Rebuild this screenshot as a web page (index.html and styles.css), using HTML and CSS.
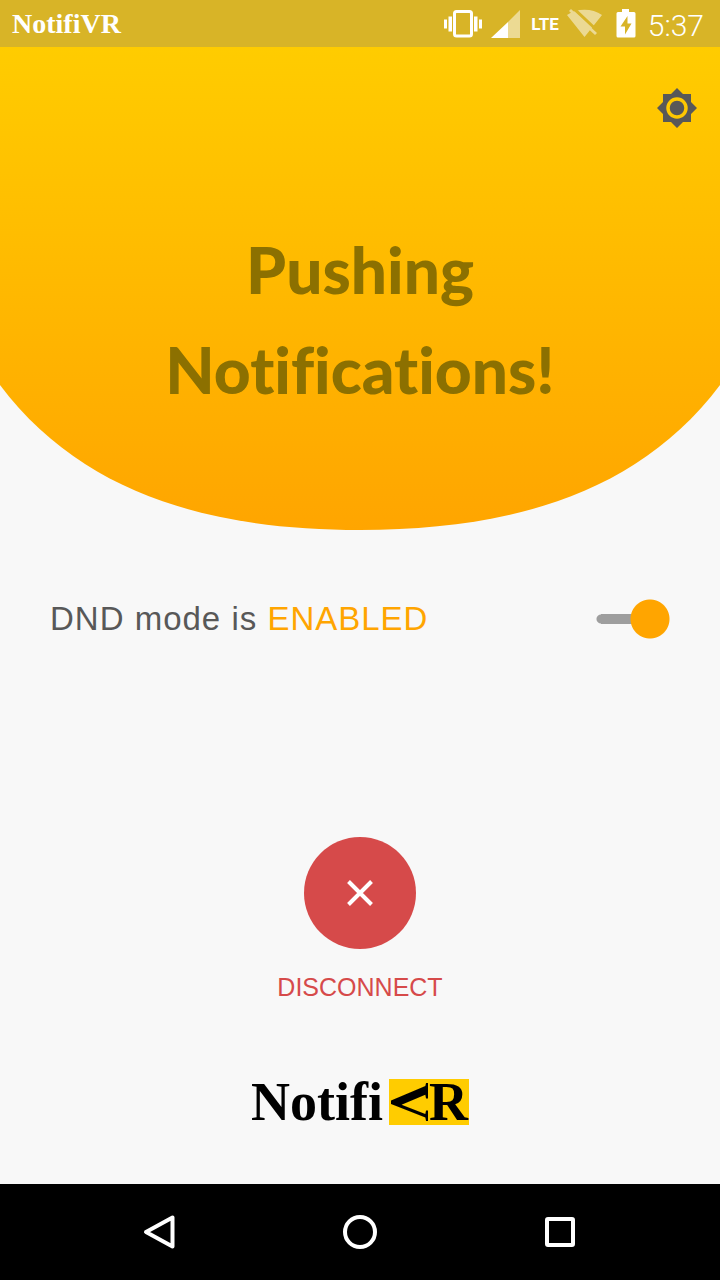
FILE: index.html
```html
<!DOCTYPE html>
<html lang="en">
<head>
<meta charset="utf-8">
<meta name="viewport" content="width=device-width, initial-scale=1">
<title>NotifiVR</title>
<link rel="stylesheet" href="styles.css">
</head>
<body>
<header class="status-bar">
  <span class="app-name">NotifiVR</span>
  <div class="status-icons">
    <svg class="vibrate" width="38" height="28" viewBox="0 0 38 28" aria-hidden="true">
      <rect x="10.500" y="1.500" width="17" height="24.500" rx="2" fill="none" stroke="#fff" stroke-width="3"/>
      <path fill="#fff" d="M0 9.500h3v9H0zM4.500 6.500h3.500v15H4.500zM30 6.500h3.500v15H30zM35 9.500h3v9h-3z"/>
    </svg>
    <svg class="signal" width="29" height="28" viewBox="0 0 29 28" aria-hidden="true">
      <path fill="#fff" opacity=".5" d="M29 0v28H17V12z"/>
      <path fill="#fff" d="M17 12v16H0z"/>
    </svg>
    <span class="lte">LTE</span>
    <svg class="wifi" width="35" height="29" viewBox="0 0 35 29" aria-hidden="true">
      <mask id="gap">
        <rect width="35" height="29" fill="#fff"/>
        <path stroke="#000" stroke-width="3" d="M4-3l30 28"/>
      </mask>
      <g fill="#fff" opacity=".5">
        <path mask="url(#gap)" d="M0 6C10-1 25-1 35 6L17.500 28z"/>
        <path d="M4 0l26 24-2 2L2 2z"/>
      </g>
    </svg>
    <svg class="battery" width="20" height="29" viewBox="0 0 20 29" aria-hidden="true">
      <path fill="#fff" fill-rule="evenodd" d="M6 0h7v3h5q1.500 0 1.500 1.500v22.500q0 1.500-1.500 1.500H2q-1.500 0-1.500-1.500V4.500q0-1.500 1.500-1.500h4zM11.500 7L4.500 17.500h4.500v8l6.500-11h-4z"/>
    </svg>
    <time class="clock">5:37</time>
  </div>
</header>

<main class="screen">
  <section class="hero">
    <svg class="hero-shape" viewBox="0 0 720 483" preserveAspectRatio="none" aria-hidden="true">
      <defs>
        <linearGradient id="sun" x1="0" y1="0" x2="0" y2="1">
          <stop offset="0" stop-color="#ffcc00"/>
          <stop offset="1" stop-color="#ffa500"/>
        </linearGradient>
      </defs>
      <path fill="url(#sun)" d="M0 0H720V338C638 447 510 483 360 483S82 447 0 338Z"/>
    </svg>
    <div class="toolbar">
      <button class="settings" type="button" aria-label="Brightness">
        <svg width="40" height="40" viewBox="0 0 40 40" aria-hidden="true">
          <path fill="#585858" d="M20 0l6 6h8v8l6 6-6 6v8h-8l-6 6-6-6H6v-8l-6-6 6-6V6h8z"/>
          <circle cx="20" cy="20" r="9" fill="#585858" stroke="#ffc800" stroke-width="3.500"/>
        </svg>
      </button>
    </div>
    <h1 class="headline">Pushing<br>Notifications!</h1>
  </section>

  <section class="dnd">
    <label class="dnd-label" for="dnd">DND mode is <span class="state">ENABLED</span></label>
    <input class="switch" id="dnd" type="checkbox" role="switch" checked>
  </section>

  <button class="disconnect" type="button">
    <span class="disc">
      <svg width="26" height="26" viewBox="0 0 26 26" aria-hidden="true">
        <path fill="none" stroke="#fff" stroke-width="4" d="M1.500 1.500l23 23M24.500 1.500l-23 23"/>
      </svg>
    </span>
    <span>DISCONNECT</span>
  </button>

  <footer class="logo" aria-label="NotifiVR">
    <span>Notifi</span>
    <span class="logo-box"><span class="turned">V</span><span>R</span></span>
  </footer>
</main>

<nav class="nav-bar">
  <button class="nav-button" type="button" aria-label="Back">
    <svg width="36" height="36" viewBox="0 0 36 36" aria-hidden="true"><path d="M4 18L30.500 3.500v29z"/></svg>
  </button>
  <button class="nav-button" type="button" aria-label="Home">
    <svg width="36" height="36" viewBox="0 0 36 36" aria-hidden="true"><circle cx="18" cy="18" r="15"/></svg>
  </button>
  <button class="nav-button" type="button" aria-label="Recent apps">
    <svg width="36" height="36" viewBox="0 0 36 36" aria-hidden="true"><rect x="5" y="5" width="26" height="26" rx="1"/></svg>
  </button>
</nav>
</body>
</html>
```
FILE: styles.css
```css
* { box-sizing: border-box; }
body {
  margin: 0;
  min-height: 100vh;
  display: flex;
  flex-direction: column;
  background: #f8f8f8;
  color: #585858;
  font-family: "Liberation Sans", Arial, sans-serif;
}
button {
  border: 0;
  padding: 0;
  background: none;
  color: inherit;
  font: inherit;
  cursor: pointer;
}
svg { display: block; }

.status-bar {
  height: 47px;
  padding: 0 16px 0 12px;
  display: flex;
  align-items: center;
  justify-content: space-between;
  background: #d8b427;
  color: #fff;
}
.app-name {
  font: bold 28px/46px "Liberation Serif", serif;
}
.status-icons {
  display: flex;
  align-items: center;
}
.signal { margin-left: 9px; }
.lte {
  margin-left: 11px;
  font: bold 17px/24px Roboto, sans-serif;
}
.wifi { margin-left: 8px; }
.battery { margin-left: 14px; }
.clock {
  margin-left: 12px;
  padding-top: 4px;
  font: 300 30px/40px Roboto, sans-serif;
}

.screen {
  flex: 1;
  display: flex;
  flex-direction: column;
}
.hero {
  position: relative;
  min-height: 483px;
  padding: 41px 23px 0;
}
.hero-shape {
  position: absolute;
  inset: 0;
  width: 100%;
  height: 100%;
}
.toolbar {
  position: relative;
  display: flex;
  justify-content: flex-end;
}
.headline {
  position: relative;
  margin: 92px 0 0;
  color: #8c7000;
  text-align: center;
  font: 900 64px/100px Lato, sans-serif;
  font-variant-ligatures: none;
}

.dnd {
  display: flex;
  align-items: center;
  justify-content: space-between;
  padding: 69px 50px 0;
}
.dnd-label {
  font-size: 33px;
  line-height: 40px;
  letter-spacing: 1px;
}
.state { color: #ffa500; }
.switch {
  appearance: none;
  width: 74px;
  height: 40px;
  margin: 0;
  background:
    radial-gradient(circle at 54px 20px, #ffa500 19px, transparent 20px),
    radial-gradient(circle at 5px 20px, #9e9e9e 4px, transparent 5px),
    linear-gradient(#9e9e9e, #9e9e9e) 5px 15px / 45px 10px no-repeat;
}
.switch:not(:checked) { transform: scaleX(-1); }

.disconnect {
  align-self: center;
  margin-top: 198px;
  display: flex;
  flex-direction: column;
  align-items: center;
  gap: 22px;
  color: #d64a4a;
  font-size: 25px;
  line-height: 32px;
}
.disc {
  width: 112px;
  height: 112px;
  display: grid;
  place-items: center;
  border-radius: 50%;
  background: #d64a4a;
}

.logo {
  margin: auto 0 59px;
  display: flex;
  justify-content: center;
  align-items: center;
  gap: 6px;
  color: #000;
  font: bold 54px/46px "Liberation Serif", serif;
}
.logo-box {
  display: flex;
  padding: 0 1px;
  background: #ffcc00;
}
.turned { transform: rotate(90deg); }

.nav-bar {
  height: 96px;
  padding: 0 60px;
  display: flex;
  background: #000;
}
.nav-button {
  flex: 1;
  display: grid;
  place-items: center;
}
.nav-button svg {
  fill: none;
  stroke: #fff;
  stroke-width: 4;
  stroke-linejoin: round;
}
```
